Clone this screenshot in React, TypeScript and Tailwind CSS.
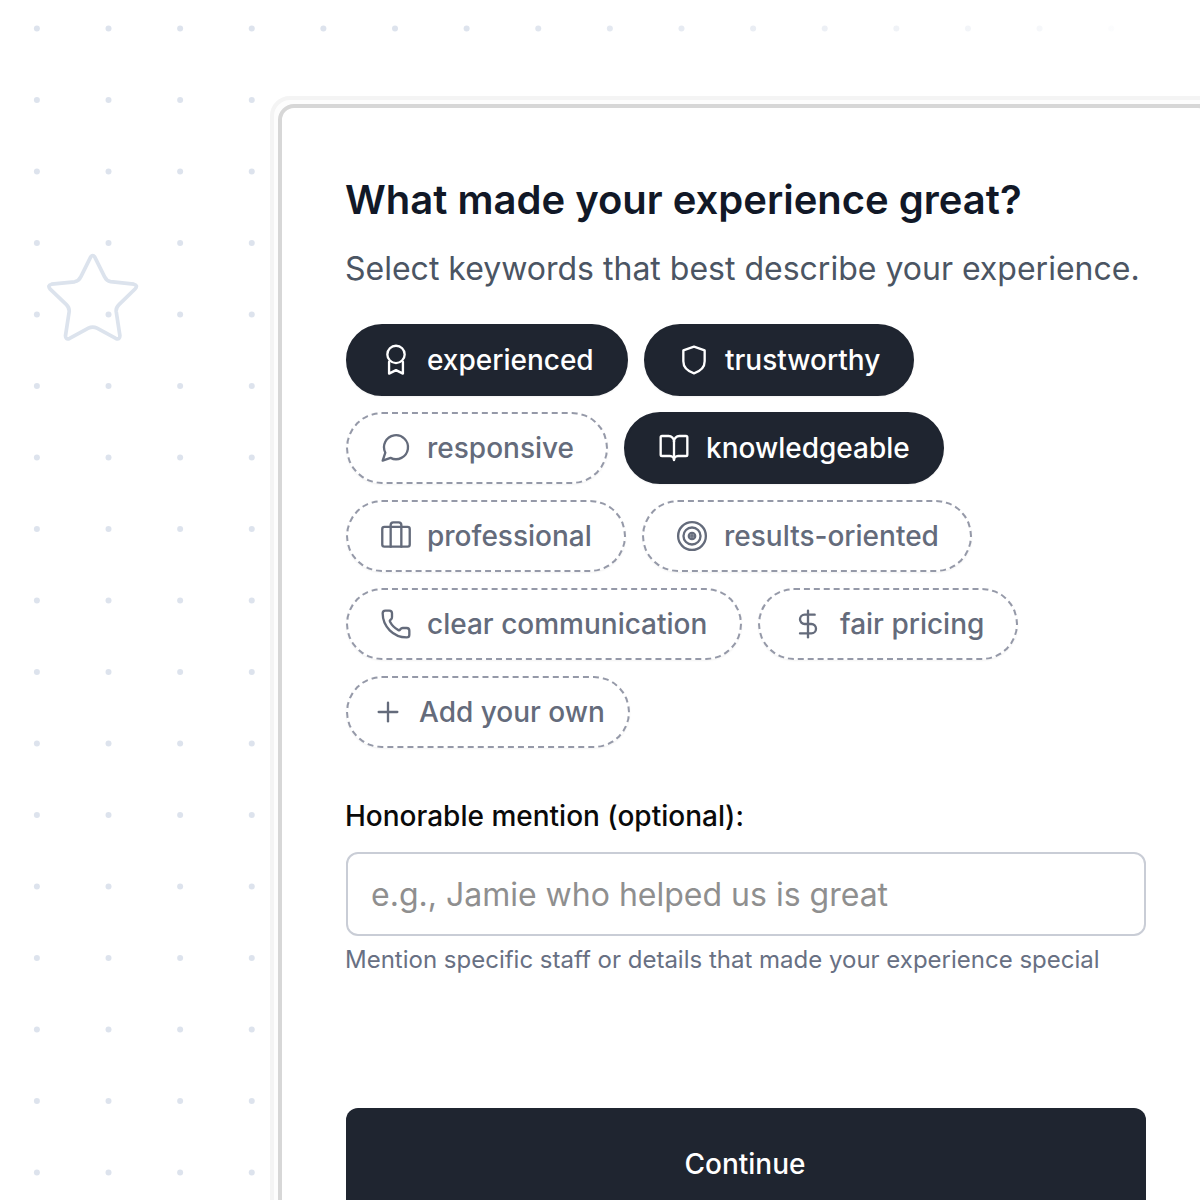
import type { ReactNode } from "react";
import { BookOpen, DollarSign, Phone, Plus } from "lucide-react";

type IconProps = { className?: string; strokeWidth?: number };

function Glyph({ className, strokeWidth, children }: IconProps & { children: ReactNode }) {
  return (
    <svg
      viewBox="0 0 24 24"
      fill="none"
      stroke="currentColor"
      strokeWidth={strokeWidth}
      strokeLinecap="round"
      strokeLinejoin="round"
      className={className}
    >
      {children}
    </svg>
  );
}

function Rosette(props: IconProps) {
  return (
    <Glyph {...props}>
      <circle cx="12" cy="7.8" r="6.5" />
      <path d="M6.8 13.4v8.8l5.2-2.6 5.2 2.6v-8.8" />
    </Glyph>
  );
}

function Shield(props: IconProps) {
  return (
    <Glyph {...props}>
      <path d="M12 2 4 4.8V13c0 4.8 3.6 7.6 8 9 4.4-1.4 8-4.2 8-9V4.8z" />
    </Glyph>
  );
}

function Bubble(props: IconProps) {
  return (
    <Glyph {...props}>
      <path d="M7.9 20A9 9 0 1 0 4 16.1L2 22Z" transform="translate(0 -0.6)" />
    </Glyph>
  );
}

function Luggage(props: IconProps) {
  return (
    <Glyph {...props}>
      <rect x="1.7" y="5.2" width="20.6" height="14.8" rx="1.6" />
      <path d="M8 20V3.8A2 2 0 0 1 10 1.8h4a2 2 0 0 1 2 2V20" />
    </Glyph>
  );
}

function Bullseye(props: IconProps) {
  return (
    <Glyph {...props}>
      <circle cx="12" cy="12" r="10.4" />
      <circle cx="12" cy="12" r="6.4" />
      <circle cx="12" cy="12" r="2.4" />
      <circle cx="12" cy="12" r="0.6" />
    </Glyph>
  );
}

const keywords = [
  { label: "experienced", icon: Rosette, selected: true, size: "w-[282px] gap-[15px]" },
  { label: "trustworthy", icon: Shield, selected: true, size: "w-[270px] gap-[15px]" },
  { label: "responsive", icon: Bubble, selected: false, size: "w-[262px] gap-[15px]" },
  { label: "knowledgeable", icon: BookOpen, selected: true, size: "w-[320px] gap-4" },
  { label: "professional", icon: Luggage, selected: false, size: "w-[280px] gap-[15px]" },
  { label: "results-oriented", icon: Bullseye, selected: false, size: "w-[330px] gap-4" },
  { label: "clear communication", icon: Phone, selected: false, size: "w-[396px] gap-[15px]" },
  { label: "fair pricing", icon: DollarSign, selected: false, size: "w-[260px] gap-4" },
];

const rows = Array.from({ length: 17 }, (_, i) => 28.5 + i * 71.5);
const cols = Array.from({ length: 16 }, (_, i) => 36.9 + i * 71.62);

function Backdrop() {
  return (
    <svg className="absolute inset-0" width="1200" height="1200" fill="none">
      <defs>
        <linearGradient id="fade" gradientUnits="userSpaceOnUse" x1="0" y1="0" x2="1200" y2="0">
          <stop offset="0.38" stopColor="#dde3ed" />
          <stop offset="0.87" stopColor="#dde3ed" stopOpacity="0.27" />
          <stop offset="0.96" stopColor="#dde3ed" stopOpacity="0" />
        </linearGradient>
      </defs>
      <g fill="url(#fade)">
        {rows.map((y) => cols.map((x) => <circle key={`${x}-${y}`} cx={x} cy={y} r="3" />))}
      </g>
      <path
        d="M90.6 257.2Q92.7 253.8 94.8 257.2L104.6 276.8Q106.4 280.9 110.6 281.6L133.8 284.2Q138.4 285.4 135 289L119 304.6Q115.8 307.6 116.2 311.5L119.9 335.6Q120 340 115.8 338.4L97 328.2Q92.7 325.9 88.4 328.2L69.6 338.4Q65.4 340 65.5 335.6L69.2 311.5Q69.4 307.6 66.4 304.6L50.2 289.2Q47 285.4 51.6 284.2L74.6 281.8Q79 280.9 80.8 276.8Z"
        stroke="#dce3ed"
        strokeWidth="3.7"
        strokeLinejoin="round"
      />
    </svg>
  );
}

export default function App() {
  return (
    <div className="relative h-[1200px] w-[1200px] overflow-hidden bg-white pt-24 pl-[270px] font-['Inter',sans-serif]">
      <Backdrop />

      <div className="relative h-[1200px] w-[952px] rounded-[20px] border-4 border-[#f4f4f4] bg-[#fdfdfd] p-1">
        <main className="h-full rounded-[16px] border-4 border-[#d7d7d7] bg-white px-16 pt-[68px]">
          <h1 className="-ml-px text-[40px] leading-[48px] font-semibold text-[#111827]">
            What made your experience great?
          </h1>
          <p className="mt-[21px] -ml-px text-[32px] leading-[48px] whitespace-nowrap text-[#4b5563]">
            Select keywords that best describe your experience.
          </p>

          <div className="mt-[31px] flex w-[700px] flex-wrap gap-4">
            {keywords.map(({ label, icon: Icon, selected, size }) => (
              <button
                key={label}
                className={`flex h-[72px] items-center rounded-full border-2 pl-8 text-[28px] font-medium whitespace-nowrap shadow-xs ${size} ${
                  selected
                    ? "border-[#1f2530] bg-[#1f2530] text-white"
                    : "border-dashed border-[#9599a8] bg-white text-[#646b7b]"
                }`}
              >
                <Icon className="size-8 shrink-0" strokeWidth={1.75} />
                {label}
              </button>
            ))}
            <button className="flex h-[72px] w-[284px] items-center gap-[15px] rounded-full border-2 border-dashed border-[#9599a8] bg-white pl-6 text-[28px] font-medium whitespace-nowrap text-[#646b7b] shadow-xs">
              <Plus className="size-8 shrink-0" strokeWidth={1.75} />
              Add your own
            </button>
          </div>

          <label className="mt-12 -ml-px block text-[28px] leading-10 font-medium text-[#0a0a0a]">
            Honorable mention (optional):
          </label>
          <input
            className="mt-4 block h-[84px] w-[800px] rounded-xl border-2 border-[#c9cdd6] bg-white px-[23px] text-[32px] placeholder:text-[#8f8f8f]"
            placeholder="e.g., Jamie who helped us is great"
          />
          <p className="mt-2 -ml-px text-[24px] leading-8 text-[#687083]">
            Mention specific staff or details that made your experience special
          </p>

          <button className="mt-[132px] h-28 w-[800px] rounded-xl bg-[#1f2530] pr-0.5 text-[28px] font-medium text-white">
            Continue
          </button>
        </main>
      </div>
    </div>
  );
}
